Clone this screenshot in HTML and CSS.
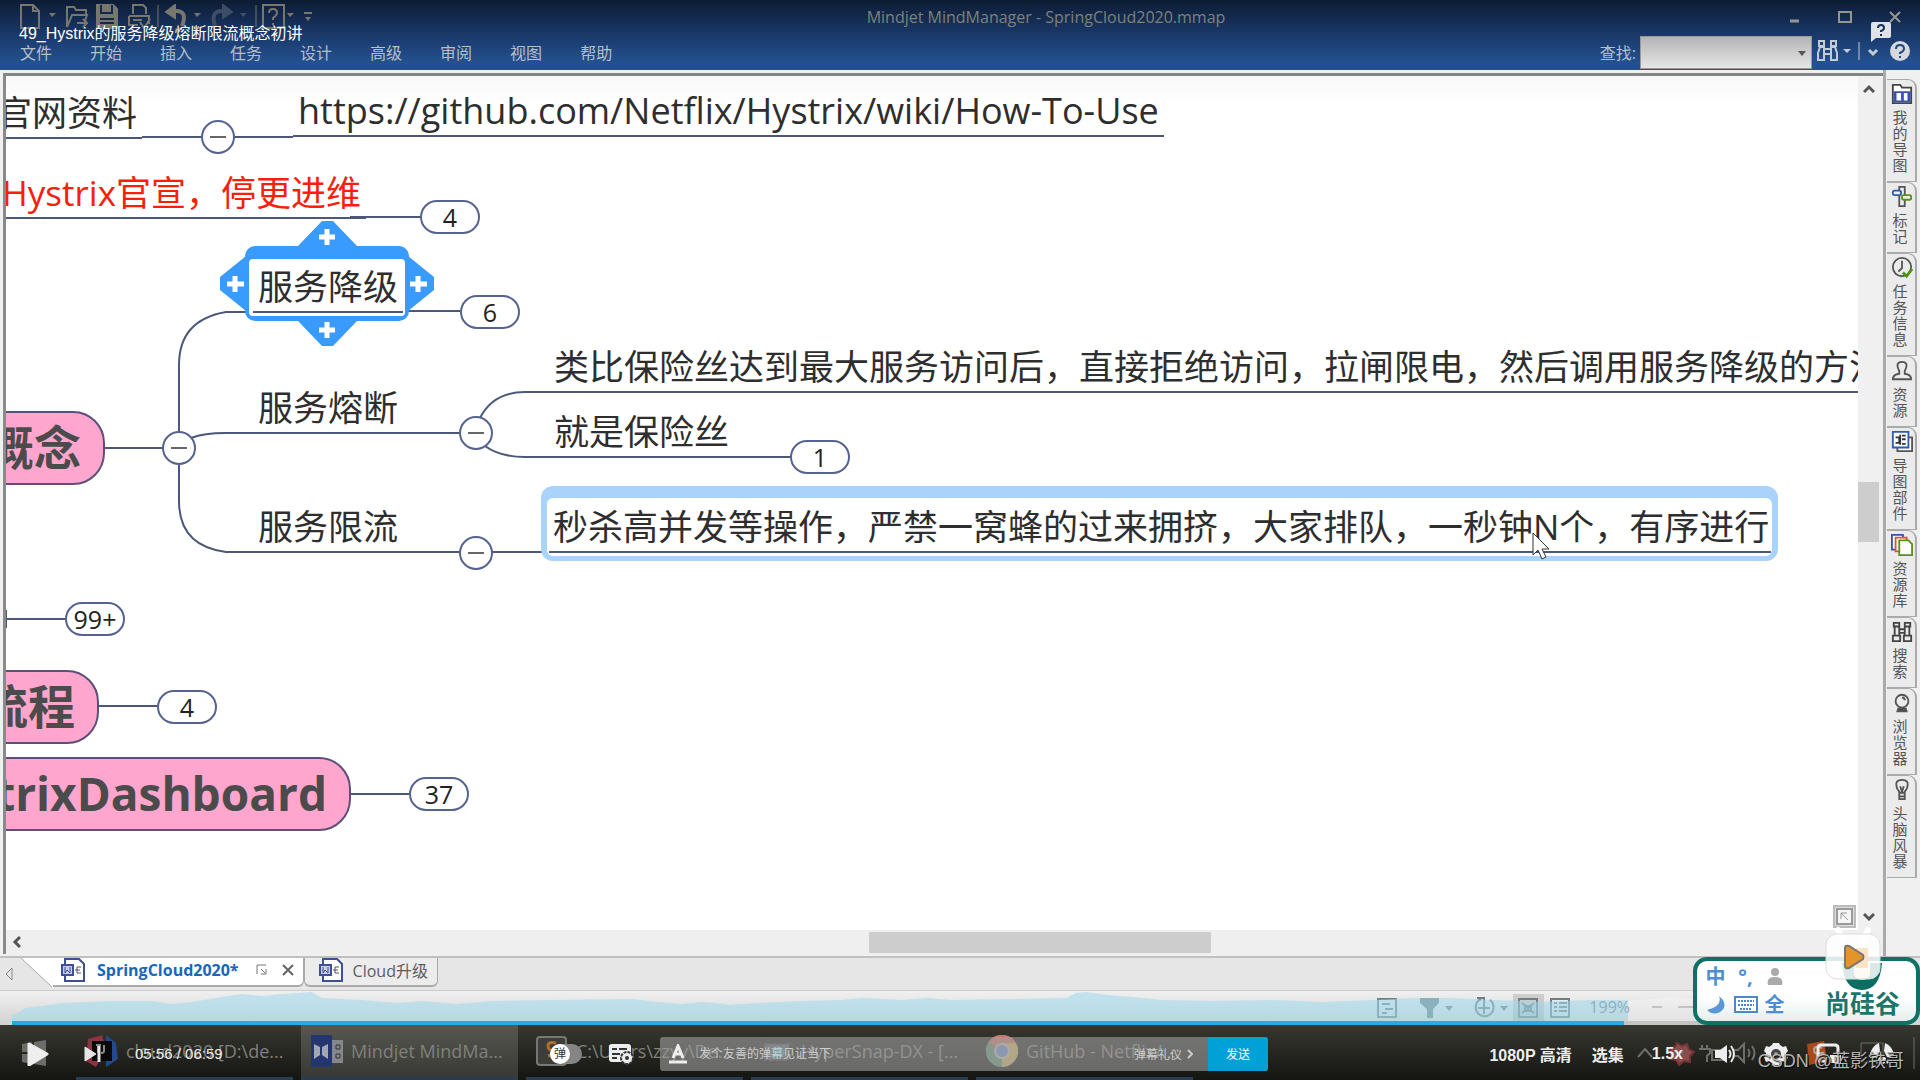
FILE: index.html
```html
<!DOCTYPE html>
<html lang="zh-CN">
<head>
    <meta charset="UTF-8">
    <meta name="viewport" content="width=device-width, initial-scale=1.0">
    <title>49_Hystrix的服务降级熔断限流概念初讲</title>
    <link rel="stylesheet" href="styles.css">
</head>
<body>
    <header class="app-header">
        <div class="title-row">
            <div class="quick-access">
                <svg width="298" height="26" viewBox="0 0 298 26" fill="none" stroke="#77776f" stroke-width="2">
                    <path d="M1 1h12l6 6v17H1zM13 1v6h6"/>
                    <path d="M47 23V3h7l2 3h10v5M47 23l5-12h15l-2 6M57 19h10M63 15l4 4-4 4"/>
                    <path d="M77 1h16l4 4v19H77z" fill="#77776f"/>
                    <path d="M81 1v8h11V1M80 15h14M80 19h14" stroke="#16294a"/>
                    <path d="M113 10V1h10l3 3v6M109 12h20v8M109 12v9h9M113 16h9M120 18l4 6 6-9"/>
                    <path d="M138 1v22M236 1v22" stroke-width="1"/>
                    <path d="M162 22q6-15-6-15h-5" stroke-width="4"/>
                    <path d="M146 8l9-7v13z" fill="#77776f"/>
                    <path d="M195 22q-5-15 7-15h5" stroke="#3d4d66" stroke-width="4"/>
                    <path d="M212 8l-9-7v13z" fill="#3d4d66" stroke="#3d4d66"/>
                    <path d="M243 1h21v23h-21z"/>
                    <path d="M249 9q0-4 4-4t4 4q0 2-4 5v2M253 19v2"/>
                    <path d="M29 9h7l-4 4zM174 9h7l-4 4zM267 9h7l-4 4zM285 13h6l-3 4z" fill="#77776f" stroke="none"/>
                    <path d="M220 9h7l-4 4z" fill="#3d4d66" stroke="none"/>
                    <path d="M284 9h8"/>
                </svg>
            </div>
            <h1 class="app-title">Mindjet MindManager - SpringCloud2020.mmap</h1>
            <div class="window-buttons">
                <button aria-label="最小化"><svg width="14" height="14"><path d="M2 11h9" stroke="#96968e" stroke-width="3"/></svg></button>
                <button aria-label="最大化"><svg width="14" height="14"><path d="M1 2h12v10H1z" fill="none" stroke="#96968e" stroke-width="2"/></svg></button>
                <button aria-label="关闭"><svg width="14" height="14"><path d="M2 2l10 10M12 2L2 12" stroke="#96968e" stroke-width="2"/></svg></button>
            </div>
        </div>
        <div class="menu-row">
            <nav class="menu">
                <a href="#">文件</a>
                <a href="#">开始</a>
                <a href="#">插入</a>
                <a href="#">任务</a>
                <a href="#">设计</a>
                <a href="#">高级</a>
                <a href="#">审阅</a>
                <a href="#">视图</a>
                <a href="#">帮助</a>
            </nav>
            <div class="search">
                <label for="find">查找:</label>
                <div class="search-box">
                    <select id="find"><option></option></select>
                    <svg width="8" height="5"><path d="M0 0h8L4 5z" fill="#555"/></svg>
                </div>
                <svg width="104" height="26" viewBox="0 0 104 26" fill="none" stroke="#c3cbd4" stroke-width="2">
                    <path d="M3 2h5v5H3zM15 2h5v5h-5zM2 21V14l2-6h4v13zM21 21v-7l-2-6h-4v13zM8 10h7M8 15h7"/>
                    <path d="M27 10h8l-4 4z" fill="#c3cbd4" stroke="none"/>
                    <path d="M43 3v18" stroke-width="1"/>
                    <path d="M53 11l4 4 4-4" stroke-width="3"/>
                    <circle cx="84" cy="12" r="10" fill="#d5d9de" stroke="none"/>
                    <path d="M80 10q0-4 4-4t4 4q0 2-4 4v1M84 17v2" stroke="#23477f"/>
                </svg>
            </div>
        </div>
        <span class="video-title">49_Hystrix的服务降级熔断限流概念初讲</span>
        <svg class="feedback" width="22" height="21" viewBox="0 0 22 21">
            <path d="M3 1h16q2 0 2 2v12q0 2-2 2H6l-5 4V3q0-2 2-2z" fill="#dfe3e8"/>
            <path d="M8 7q0-3 3-3t3 3q0 2-3 3v1M11 13v2" fill="none" stroke="#16305c" stroke-width="2"/>
        </svg>
    </header>

    <main class="workspace">
        <section class="document">
            <div class="map-row">
                <div class="map">
                    <svg class="links" width="1852" height="854">
                        <g transform="translate(-6 -76)" fill="none" stroke="#4b587a" stroke-width="2">
                            <path d="M142 137h60M234 137h59M350 217h71"/>
                            <path d="M104 448h59M179 432v-67q0-45 47-53h27M403 311h57"/>
                            <path d="M191 438q13-5 34-5h28M179 465v36q0 45 47 51h27"/>
                            <path d="M480 418q13-26 45-26h25M485 446q15 11 40 11h25M492 552h57"/>
                            <path d="M6 619h59M99 706h58M351 794h58M6 610v18"/>
                            <path d="M298 246l24-25h11l24 25zM298 321l24 25h11l24-25zM246 256l-26 21v13l26 21zM408 256l26 21v13l-26 21z" fill="#3a9bfe" stroke="none"/>
                            <rect x="245" y="246" width="164" height="75" rx="10" fill="#3a9bfe" stroke="none"/>
                            <rect x="249" y="259" width="156" height="57" rx="4" fill="#fff" stroke="none"/>
                            <path d="M319 237h16M327 229v16M319 330h16M327 322v16M227 284h17M235 276v16M410 284h17M418 276v16" stroke="#fff" stroke-width="5"/>
                            <rect x="541" y="486" width="1237" height="75" rx="12" fill="#aad3fb" stroke="none"/>
                            <rect x="547" y="498" width="1225" height="58" rx="6" fill="#fff" stroke="none"/>
                        </g>
                    </svg>
                    <div class="node site">官网资料</div>
                    <a class="node link" href="#">https://github.com/Netflix/Hystrix/wiki/How-To-Use</a>
                    <div class="node notice">Hystrix官宣，停更进维</div>
                    <div class="node fallback">服务降级</div>
                    <div class="node breaker">服务熔断</div>
                    <div class="node limit">服务限流</div>
                    <div class="node breaker-note">类比保险丝达到最大服务访问后，直接拒绝访问，拉闸限电，然后调用服务降级的方法</div>
                    <div class="node fuse">就是保险丝</div>
                    <div class="node limit-note">秒杀高并发等操作，严禁一窝蜂的过来拥挤，大家排队，一秒钟N个，有序进行</div>
                    <div class="topic concept">概念</div>
                    <div class="topic flow">流程</div>
                    <div class="topic dashboard">trixDashboard</div>
                    <button class="count notice-count">4</button>
                    <button class="count fallback-count">6</button>
                    <button class="count fuse-count">1</button>
                    <button class="count more-count">99+</button>
                    <button class="count flow-count">4</button>
                    <button class="count dashboard-count">37</button>
                    <button class="fold site-fold" aria-label="折叠"></button>
                    <button class="fold concept-fold" aria-label="折叠"></button>
                    <button class="fold breaker-fold" aria-label="折叠"></button>
                    <button class="fold limit-fold" aria-label="折叠"></button>
                    <svg class="cursor" width="18" height="28" viewBox="0 0 18 28"><path d="M1 1v22l5-5 4 9 4-2-4-8h7z" fill="#fff" stroke="#333" stroke-width="1"/></svg>
                    <svg class="fit" width="23" height="23" viewBox="0 0 23 23" fill="none" stroke="#999"><path d="M1 1h21v21H1z" fill="#ddd" stroke="#bbb" stroke-width="2"/><path d="M4 4h15v15H4z" fill="#f5f5f5" stroke-width="2"/><path d="M8 14V8h6M8 8l7 7"/></svg>
                </div>
                <div class="scroll-y">
                    <svg width="12" height="9"><path d="M1 8l5-5 5 5" fill="none" stroke="#555" stroke-width="3"/></svg>
                    <div class="thumb-y"></div>
                    <svg width="12" height="9"><path d="M1 1l5 5 5-5" fill="none" stroke="#555" stroke-width="3"/></svg>
                </div>
            </div>
            <div class="scroll-x">
                <svg width="9" height="12"><path d="M8 1L3 6l5 5" fill="none" stroke="#555" stroke-width="3"/></svg>
                <div class="thumb-x"></div>
            </div>
        </section>
        <aside class="dock">
            <button>
                <svg viewBox="0 0 24 24"><path d="M2 22V2h8l2 3h10v17z" fill="#fff" stroke="#444" stroke-width="2"/><path d="M3 9h18v12H3z" fill="#3652b5"/><path d="M6 11h5v8H6zM14 11h4v8h-4z" fill="#fff"/></svg>
                <span>我的导图</span>
            </button>
            <button>
                <svg viewBox="0 0 24 24" fill="#eee" stroke-width="2"><path d="M9 1h6v21H9z" stroke="#555"/><rect x="2" y="5" width="9" height="5" rx="2" stroke="#2d5bb0"/><rect x="12" y="10" width="10" height="5" rx="2" stroke="#5a8f1c"/></svg>
                <span>标记</span>
            </button>
            <button>
                <svg viewBox="0 0 24 24" fill="none" stroke="#555" stroke-width="2"><circle cx="12" cy="11" r="10"/><path d="M12 4v8l-4 4"/><path d="M13 17l4 4 6-8" stroke="#4f9313" stroke-width="3"/></svg>
                <span>任务信息</span>
            </button>
            <button>
                <svg viewBox="0 0 24 24" fill="none" stroke="#555" stroke-width="2"><path d="M2 21q0-5 7-6v-3Q4 2 12 2t3 10v3q7 1 7 6z"/></svg>
                <span>资源</span>
            </button>
            <button>
                <svg viewBox="0 0 24 24" fill="#fff" stroke-width="2"><path d="M7 7h16v15H7z" stroke="#555"/><path d="M2 1h17v17H2z" stroke="#2d5bb0"/><path d="M10 4v11M5 7h4v6H5M16 5h-4M16 9h-4M16 14h-4" stroke="#333"/></svg>
                <span>导图部件</span>
            </button>
            <button>
                <svg viewBox="0 0 24 24" fill="#fff" stroke-width="2"><path d="M1 1h12v16H1z" stroke="#3652a5"/><path d="M5 4h12v15H5z" stroke="#e0532c"/><path d="M9 7h10l4 4v12H9z" stroke="#5a8f1c"/></svg>
                <span>资源库</span>
            </button>
            <button>
                <svg viewBox="0 0 24 24" fill="none" stroke="#444" stroke-width="2"><path d="M3 2h6v4H3zM15 2h6v4h-6zM4 6h5v10H4zM15 6h5v10h-5zM2 16h8v6H2zM14 16h8v6h-8zM9 9h6M9 13h6"/></svg>
                <span>搜索</span>
            </button>
            <button>
                <svg viewBox="0 0 24 24" fill="none" stroke="#555" stroke-width="2"><circle cx="12" cy="10" r="7"/><path d="M12 6q3 0 3 3"/><path d="M8 18h8l1 3H7z" fill="#444"/></svg>
                <span>浏览器</span>
            </button>
            <button>
                <svg viewBox="0 0 24 24" fill="none" stroke="#555" stroke-width="2"><path d="M9 15q0-2-2-4Q3 1 12 1t5 10q-2 2-2 4zM9 15v7h6v-7M9 19h6M10 8l2 6 2-6"/></svg>
                <span>头脑风暴</span>
            </button>
        </aside>
    </main>

    <div class="file-tabs">
        <svg class="tab-prev" width="10" height="16"><path d="M8 2v12L2 8z" fill="none" stroke="#888"/></svg>
        <svg class="tab-slope" width="32" height="30"><path d="M0 0h32v30z" fill="#fff"/><path d="M0 0l31 29" stroke="#aaa"/></svg>
        <button class="tab active">
            <svg width="24" height="24" viewBox="0 0 24 24" fill="#fff" stroke="#3d4f96" stroke-width="2"><path d="M4 1h14l5 5v17H4z"/><path d="M1 7h11v10H1z" fill="#c8cde6"/><path d="M4 9v6l2-3 3 3V9" fill="none" stroke-width="1"/><path d="M20 9h-4v6h4M14 12h5" fill="none" stroke="#555" stroke-width="1"/></svg>
            SpringCloud2020*
            <svg class="tab-mark" width="11" height="11" fill="none" stroke="#777"><path d="M1 10V1h9M5 5l4 4M10 5v5H5"/></svg>
            <svg width="12" height="12"><path d="M1 1l10 10M11 1L1 11" stroke="#666" stroke-width="2"/></svg>
        </button>
        <button class="tab">
            <svg width="24" height="24" viewBox="0 0 24 24" fill="#fff" stroke="#3d4f96" stroke-width="2"><path d="M4 1h14l5 5v17H4z"/><path d="M1 7h11v10H1z" fill="#c8cde6"/><path d="M4 9v6l2-3 3 3V9" fill="none" stroke-width="1"/><path d="M20 9h-4v6h4M14 12h5" fill="none" stroke="#555" stroke-width="1"/></svg>
            Cloud升级
        </button>
    </div>

    <div class="status-bar">
        <div class="status-tools">
            <svg width="206" height="28" viewBox="0 0 206 28" fill="none" stroke="#737e83" stroke-width="2">
                <path d="M1 6h18v18H1zM5 11h8M8 16h8M5 20h5"/>
                <path d="M43 5h19v5l-6 6v9h-6v-9l-7-6z" fill="#737e83" stroke="none"/>
                <path d="M68 13h8l-4 5zM123 13h8l-4 5z" fill="#737e83" stroke="none"/>
                <path d="M113 7a9 9 0 1 1-9-1M107 9v12M101 15h12M100 5h7v6"/>
                <path d="M136 1h31v27h-31z" fill="#00000020" stroke="none"/>
                <path d="M142 6h18v18h-18zM145 10l12 10M157 10l-12 10M148 13h6v5h-6z"/>
                <path d="M174 6h18v18h-18zM177 10h3M182 10h8M177 14h3M182 14h8M177 18h3M182 18h8"/>
            </svg>
            <span>199%</span>
            <svg width="60" height="10"><path d="M0 5h10M26 5h34" stroke="#aaa" stroke-width="2"/></svg>
        </div>
        <svg class="heat" viewBox="0 0 1896 30" preserveAspectRatio="none">
            <path d="M0 30V24L6 22L14 17L30 15L50 12L100 10L140 10L160 13L180 11L210 6L230 3L250 5L270 3L300 1L310 7L350 9L385 12L410 10L445 13L480 10L540 9L620 8L645 11L670 13L690 11L705 12L716 14L745 12L790 10L830 9L850 7L890 9L915 7L940 9L1000 8L1054 7L1064 2L1074 1L1096 4L1120 6L1150 9L1200 10L1260 9L1310 11L1360 9L1400 7L1440 7L1480 9L1530 11L1580 9L1616 9V30z" fill="#9fd9ee" opacity="0.55"/>
            <path d="M1616 30V10L1660 6L1690 9L1740 9L1800 11L1896 14V30z" fill="#fff" opacity="0.3"/>
        </svg>
        <div class="progress"><div class="played"></div></div>
    </div>

    <footer class="taskbar">
        <div class="apps">
            <svg class="start" width="24" height="26"><path d="M0 4l10-2v10H0zM12 2l12-2v12H12zM0 14h10v10L0 22zM12 14h12v12l-12-2z" fill="#6c6c68"/></svg>
            <button class="app">
                <svg width="32" height="32" viewBox="0 0 32 32"><path d="M2 4l14-4 4 14L10 32 0 26z" fill="#8c3344"/><path d="M20 0l10 8 2 16-12 8z" fill="#234a8c"/><path d="M6 6h20v20H6z" fill="#0a0a0a"/><path d="M10 10h5M12 10v8M18 10v6q0 2-3 2" stroke="#888" stroke-width="2" fill="none"/></svg>
                <span>cloud2020 [D:\de...</span>
            </button>
            <button class="app current">
                <svg width="32" height="32" viewBox="0 0 32 32"><path d="M0 0h21v32H0z" fill="#24366f"/><path d="M21 5h11v23H21z" fill="#85878b"/><path d="M3 9l6 3V20l-6 4zM17 9l-6 3v8l6 4z" fill="#a4a8b0"/><path d="M25 10h4v4h-4zM25 19h4v4h-4z" fill="none" stroke="#333"/></svg>
                <span>Mindjet MindMa...</span>
            </button>
            <button class="app">
                <svg width="32" height="32" viewBox="0 0 32 32"><rect x="1" y="2" width="29" height="28" rx="3" fill="#3d3d3b" stroke="#777" stroke-width="2"/><path d="M20 8q-8-2-8 3t8 5-8 5" fill="none" stroke="#a8702a" stroke-width="3"/></svg>
                <span>C:\Users\zzyy\De...</span>
            </button>
            <button class="app">
                <svg width="32" height="32" viewBox="0 0 32 32"><path d="M4 9h24v16H4z" fill="#5c6464" stroke="#494949" stroke-width="2" stroke-dasharray="4 3"/><circle cx="17" cy="17" r="6" fill="#36a3ad"/></svg>
                <span>HyperSnap-DX - [...</span>
            </button>
            <button class="app">
                <svg width="32" height="32" viewBox="0 0 32 32"><path d="M16 16L2 8a16 16 0 0 1 28 0z" fill="#c77568"/><path d="M16 16L2 8a16 16 0 0 0 14 24z" fill="#5c9172"/><path d="M16 16h15A16 16 0 0 0 30 8M16 32a16 16 0 0 0 14-24H16z" fill="#cfae60"/><circle cx="16" cy="16" r="7" fill="#6f8cc8" stroke="#bbb" stroke-width="2"/></svg>
                <span>GitHub - Netflix/...</span>
            </button>
        </div>

        <svg class="tray" width="280" height="32" viewBox="0 0 280 32" fill="none" stroke="#6e6e6a" stroke-width="2">
            <path d="M2 20l7-8 7 8"/>
            <path d="M41 6l5 3 5-2 2 5 5 3-4 4v6l-6-1-5 4-3-5-6-1 2-6-3-5 6-1z" fill="#8a4c4c" stroke="#713333"/>
            <path d="M36 17l4-3 4 3 4-3" stroke="#5c6c8c"/>
            <path d="M66 8v4h5V8M63 12h11v4l-3 3v6M76 13h12v10H76z"/>
            <path d="M97 13h5l6-6v18l-6-6h-5M112 12q3 4 0 8M116 9q5 7 0 14"/>
            <path d="M134 11h14v9h-14zM141 7v19"/>
            <path d="M171 7l17-3 3 20-18 4z" fill="#a8491c" stroke="none"/><path d="M186 11q-8-3-8 2t7 3-5 7" stroke="#b7a498"/>
            <path d="M225 6h22v19h-22zM278 0v32" stroke-width="1"/>
        </svg>

        <div class="player">
            <div class="player-left">
                <button aria-label="播放"><svg width="22" height="24"><path d="M2 2l18 10L2 23z" fill="#eee" stroke="#eee" stroke-width="3" stroke-linejoin="round"/></svg></button>
                <button class="next" aria-label="下一集"><svg width="17" height="16"><path d="M1 1l11 7-11 7z" fill="#e5e5e5" stroke="#e5e5e5"/><path d="M15 0v16" stroke="#e5e5e5" stroke-width="3"/></svg></button>
                <span class="time">05:56 / 06:59</span>
            </div>
            <div class="player-send">
                <button class="danmu" aria-label="弹幕开关"><span>弹</span></button>
                <button aria-label="弹幕设置"><svg width="26" height="22" viewBox="0 0 26 22"><rect x="1" y="1" width="22" height="18" rx="3" fill="#eee"/><path d="M4 6h5M11 6h8M4 11h8M4 15h5" stroke="#333" stroke-width="2"/><circle cx="19" cy="15" r="6" fill="#eee" stroke="#333" stroke-width="2" stroke-dasharray="3 1"/><circle cx="19" cy="15" r="2" fill="#333"/></svg></button>
                <div class="danmu-bar">
                    <svg width="18" height="20" viewBox="0 0 18 20" fill="none" stroke="#eee"><path d="M4 14L9 2l5 12M6 10h6" stroke-width="3"/><path d="M0 18h18" stroke-width="3"/></svg>
                    <input type="text" aria-label="弹幕" placeholder="发个友善的弹幕见证当下">
                    <a href="#">弹幕礼仪<svg width="6" height="10"><path d="M1 1l4 4-4 4" fill="none" stroke="#ccc" stroke-width="2"/></svg></a>
                    <button class="send">发送</button>
                </div>
            </div>
            <div class="player-right">
                <button>1080P 高清</button>
                <button>选集</button>
                <button class="speed">1.5x</button>
                <button aria-label="音量"><svg width="22" height="20" viewBox="0 0 22 20"><path d="M1 6h5l7-5v18l-7-5H1z" fill="#eee"/><path d="M15 6q3 4 0 8M17 2q6 8 0 16" fill="none" stroke="#eee" stroke-width="2"/></svg></button>
                <button aria-label="设置"><svg width="26" height="24" viewBox="0 0 26 24"><path d="M9 3l1-2h6l1 2 3 2 3-1 2 5-2 2v2l2 2-2 5-3-1-3 2-1 2h-6l-1-2-3-2-3 1-2-5 2-2v-2L1 9l2-5 3 1z" fill="#eee"/><circle cx="13" cy="12" r="5" fill="#444"/><circle cx="13" cy="12" r="2" fill="#999"/></svg></button>
                <button aria-label="画中画"><svg width="26" height="22" viewBox="0 0 26 22"><path d="M10 18H5q-3 0-3-3V5q0-3 3-3h14q3 0 3 3v5" fill="none" stroke="#eee" stroke-width="3"/><rect x="14" y="12" width="11" height="8" fill="#eee"/></svg></button>
                <button aria-label="全屏"><svg width="26" height="24" viewBox="0 0 26 24" fill="#eee"><path d="M10 1Q3 4 1 12l2 4 5-1 3-6zM16 1q7 3 9 11l-2 4-5-1-3-6zM13 13l4 3-1 5-3 2-3-2-1-5zM4 18l4 4 1-3zM22 18l-4 4-1-3z"/></svg></button>
            </div>
        </div>
        <span class="watermark">CSDN @蓝影铁哥</span>
    </footer>

    <div class="ime">
        <div class="ime-keys">
            <span>中</span><span>°,</span>
            <svg width="16" height="20"><circle cx="8" cy="5" r="4" fill="#aaa"/><path d="M1 18q-2-8 7-8t7 8z" fill="#aaa"/></svg>
            <svg width="20" height="20"><path d="M13 1q4 10-12 14 6 6 13 2t3-12z" fill="#5b97d6"/></svg>
            <svg width="24" height="18"><rect x="1" y="1" width="22" height="15" fill="#fff" stroke="#4d87c8" stroke-width="2"/><path d="M4 5h16M4 9h16M6 13h12" stroke="#4d87c8" stroke-width="2" stroke-dasharray="2 1"/></svg>
            <span>全</span>
        </div>
        <div class="brand">
            <svg width="44" height="28" viewBox="0 0 44 28"><path d="M2 0q2 27 20 27T42 0" fill="#0c6e62"/><path d="M14 0v9q0 8 8 8t8-8V0" fill="#f7dcbc"/></svg>
            <span>尚硅谷</span>
        </div>
        <svg class="marker" width="66" height="66" viewBox="0 0 66 66">
            <path d="M18 12l5 9M48 12l-5 9" stroke="#fff" stroke-width="6" stroke-linecap="round"/>
            <rect x="6" y="16" width="54" height="45" rx="11" fill="#fff" fill-opacity="0.85" stroke="#ddd"/>
            <path d="M36 30h12v20H36z" fill="#fce3c7"/>
            <path d="M25 30q0-3 4-2l14 9q1 2 0 4l-14 9q-4 1-4-2z" fill="#e4942b" stroke="#777" stroke-width="2"/>
        </svg>
    </div>
</body>
</html>
```
FILE: styles.css
```css
* {
    box-sizing: border-box;
}

body {
    margin: 0;
    height: 100vh;
    display: flex;
    flex-direction: column;
    overflow: hidden;
    position: relative;
    font-family: "Open Sans", "Noto Sans CJK SC", sans-serif;
    font-size: 16px;
    background-color: #e6e6e6;
}

button {
    border: none;
    background: none;
    padding: 0;
    font-family: inherit;
    font-size: inherit;
    font-weight: inherit;
    color: inherit;
    cursor: pointer;
}

a {
    color: inherit;
    text-decoration: none;
}

svg {
    display: block;
    flex-shrink: 0;
}

/* header */
.app-header {
    position: relative;
    background: linear-gradient(#0d1c34, #173360 40%, #23508f 88%);
}

.title-row {
    display: flex;
    align-items: center;
    height: 34px;
    padding: 0 18px 0 20px;
}

.app-title {
    flex: 1;
    margin: 0 14px 0 0;
    text-align: center;
    font-size: 16px;
    font-weight: normal;
    color: #7f8079;
}

.window-buttons {
    display: flex;
    gap: 36px;
}

.menu-row {
    display: flex;
    justify-content: space-between;
    align-items: center;
    height: 36px;
    padding: 0 0 0 20px;
    color: #b6bfc8;
}

.menu {
    display: flex;
    gap: 38px;
}

.search {
    display: flex;
    align-items: center;
    gap: 4px;
}

.search-box {
    position: relative;
}

.search-box svg {
    position: absolute;
    right: 6px;
    top: 15px;
    pointer-events: none;
}

.search select {
    display: block;
    appearance: none;
    width: 172px;
    height: 33px;
    border: 1px solid #999;
    border-radius: 0;
    background: linear-gradient(#b4b4b4, #e6e6e6);
}

.video-title {
    position: absolute;
    left: 19px;
    top: 22px;
    line-height: 24px;
    font-family: "Liberation Sans", "Noto Sans CJK SC", sans-serif;
    color: #fff;
}

.feedback {
    position: absolute;
    right: 28px;
    top: 21px;
}

/* workspace */
.workspace {
    flex: 1;
    display: flex;
    min-height: 0;
    border-bottom: 2px solid #c0c0c0;
    background-color: #f0f0f0;
}

.document {
    flex: 1;
    min-width: 0;
    display: flex;
    flex-direction: column;
    margin: 3px 0 2px 3px;
    border-top: 3px solid #858585;
    border-left: 3px solid #8a8a8a;
}

.map-row {
    flex: 1;
    display: flex;
    min-height: 0;
}

.map {
    flex: 1;
    position: relative;
    overflow: hidden;
    background: linear-gradient(#f8f8f8, #fff 30px);
}

.links {
    position: absolute;
    left: 0;
    top: 0;
}

.node {
    position: absolute;
    padding: 0 5px 4px;
    border-bottom: 2px solid #4b587a;
    font-size: 35px;
    line-height: 40px;
    white-space: nowrap;
    color: #2e2e2e;
}

.site {
    left: -14px;
    top: 17px;
}

.link {
    left: 287px;
    top: 15px;
    font-size: 36px;
}

.notice {
    left: -9px;
    top: 97px;
    color: #f8200a;
}

.fallback {
    left: 247px;
    top: 191px;
}

.breaker,
.limit {
    left: 247px;
    width: 208px;
}

.breaker {
    top: 312px;
}

.limit {
    top: 431px;
}

.breaker-note,
.fuse,
.limit-note {
    left: 543px;
}

.breaker-note {
    top: 271px;
}

.fuse {
    top: 336px;
    width: 242px;
}

.limit-note {
    top: 431px;
    width: 1222px;
    padding-left: 4px;
}

.topic {
    position: absolute;
    height: 74px;
    padding: 0 22px;
    border: 2px solid #5c4f7c;
    border-radius: 32px;
    background-color: #ffa6ce;
    font-size: 47px;
    font-weight: bold;
    line-height: 68px;
    white-space: nowrap;
    color: #4b4b4b;
}

.concept {
    top: 335px;
    right: calc(100% - 99px);
}

.flow {
    top: 594px;
    right: calc(100% - 93px);
}

.dashboard {
    top: 681px;
    right: calc(100% - 345px);
    font-size: 46px;
}

.count {
    position: absolute;
    width: 60px;
    height: 34px;
    border: 2px solid #566390;
    border-radius: 17px;
    background-color: #fff;
    font-size: 25px;
    line-height: 28px;
    color: #222;
}

.notice-count {
    left: 414px;
    top: 124px;
}

.fallback-count {
    left: 454px;
    top: 219px;
}

.fuse-count {
    left: 784px;
    top: 364px;
}

.more-count {
    left: 59px;
    top: 526px;
}

.flow-count {
    left: 151px;
    top: 614px;
}

.dashboard-count {
    left: 403px;
    top: 701px;
}

.fold {
    position: absolute;
    display: flex;
    align-items: center;
    justify-content: center;
    width: 34px;
    height: 34px;
    border: 2px solid #566390;
    border-radius: 50%;
    background-color: #fff;
}

.fold::before {
    content: "";
    width: 16px;
    height: 2px;
    background-color: #666;
}

.site-fold {
    left: 195px;
    top: 44px;
}

.concept-fold {
    left: 156px;
    top: 355px;
}

.breaker-fold {
    left: 453px;
    top: 340px;
}

.limit-fold {
    left: 453px;
    top: 460px;
}

.cursor {
    position: absolute;
    left: 1526px;
    top: 456px;
}

.fit {
    position: absolute;
    right: 2px;
    bottom: 2px;
}

.scroll-y {
    display: flex;
    flex-direction: column;
    align-items: center;
    width: 25px;
    padding: 8px 4px 8px 0;
    background-color: #f0f0f0;
}

.thumb-y {
    width: 21px;
    height: 60px;
    margin: 389px 0 auto;
    background-color: #cdcdcd;
}

.scroll-x {
    display: flex;
    align-items: center;
    height: 24px;
    padding-left: 6px;
    background-color: #efefef;
}

.thumb-x {
    width: 342px;
    height: 21px;
    margin-left: 848px;
    background-color: #cdcdcd;
}

/* right dock */
.dock {
    width: 37px;
    padding: 9px 3px 0 1px;
    border-left: 3px solid #aaa;
}

.dock button {
    display: block;
    width: 30px;
    padding: 3px 0 8px;
    border: solid #aaa;
    border-width: 1px 2px 1px 0;
    border-radius: 0 9px 0 0;
    background-color: #ebebeb;
}

.dock svg {
    width: 24px;
    height: 22px;
    margin: 0 0 4px 3px;
}

.dock span {
    display: block;
    width: 16px;
    margin-left: 5px;
    font-size: 15px;
    line-height: 16px;
    word-break: break-all;
    color: #555;
}

/* document tabs */
.file-tabs {
    display: flex;
    align-items: flex-start;
    height: 33px;
    padding-left: 4px;
    border-bottom: 1px solid #ccc;
}

.tab-prev {
    margin: 8px 7px 0 0;
}

.tab {
    display: flex;
    align-items: center;
    gap: 10px;
    height: 29px;
    padding: 0 9px 4px 14px;
    border: solid #aaa;
    border-width: 0 1px 2px;
    border-radius: 0 0 6px 6px;
    background-color: #ececec;
    color: #5c5c5c;
}

.tab.active {
    gap: 12px;
    padding-left: 8px;
    border-left: none;
    border-radius: 0 0 6px 0;
    background-color: #fff;
    font-weight: bold;
    color: #1766be;
}

.tab-mark {
    margin: 0 3px 0 5px;
}

/* status bar with the player timeline over it */
.status-bar {
    position: relative;
    height: 34px;
    background: linear-gradient(#f0f0f0, #d2d2d2);
}

.status-tools {
    display: flex;
    align-items: center;
    justify-content: flex-end;
    height: 32px;
    padding-right: 208px;
    color: #737e83;
}

.status-tools span {
    margin: 0 22px 0 6px;
}

.heat {
    position: absolute;
    left: 12px;
    bottom: 4px;
    width: calc(100% - 24px);
    height: 30px;
}

.progress {
    position: absolute;
    left: 12px;
    right: 12px;
    bottom: 0;
    height: 4px;
    background-color: #c4c4c4;
}

.played {
    width: 85%;
    height: 4px;
    background-color: #23ade5;
}

/* taskbar */
.taskbar {
    position: relative;
    height: 55px;
    background: linear-gradient(#383832, #141411);
}

.apps {
    display: flex;
    align-items: center;
    gap: 8px;
    height: 55px;
    padding-left: 22px;
}

.start {
    margin-right: 22px;
}

.app {
    display: flex;
    align-items: center;
    gap: 8px;
    width: 217px;
    height: 55px;
    padding-left: 10px;
    border-bottom: 3px solid #2a3c50;
    font-size: 18px;
    white-space: nowrap;
    color: #80807c;
}

.app.current {
    background: linear-gradient(#585852, #383834);
}

.tray {
    position: absolute;
    right: 4px;
    top: 12px;
}

.player {
    position: absolute;
    top: 0;
    left: 0;
    right: 0;
    height: 55px;
    display: flex;
    align-items: center;
    padding: 2px 25px 0 27px;
    font-family: "Liberation Sans", "Noto Sans CJK SC", sans-serif;
    color: #eee;
}

.player-left {
    display: flex;
    align-items: center;
    width: 28%;
}

.next {
    margin: 0 34px 0 35px;
}

.time {
    font-size: 15px;
}

.player-send {
    display: flex;
    align-items: center;
    gap: 26px;
}

.danmu {
    width: 32px;
    height: 20px;
    border-radius: 10px;
    background-color: #858585;
}

.danmu span {
    display: block;
    width: 20px;
    height: 20px;
    border-radius: 50%;
    background-color: #fff;
    font-size: 12px;
    line-height: 20px;
    color: #333;
}

.danmu-bar {
    display: flex;
    align-items: center;
    gap: 12px;
    width: 608px;
    height: 34px;
    padding-left: 9px;
    border-radius: 3px;
    background-color: rgba(160, 160, 160, 0.6);
    font-size: 12px;
    color: #ccc;
}

.danmu-bar a {
    display: flex;
    align-items: center;
    gap: 5px;
    margin-right: 3px;
}

.danmu-bar input {
    flex: 1;
    min-width: 0;
    padding: 0;
    border: none;
    background: none;
    font-family: inherit;
    font-size: 12px;
    color: #eee;
}

.danmu-bar input::placeholder {
    color: #ccc;
}

.send {
    width: 60px;
    height: 34px;
    border-radius: 0 3px 3px 0;
    background-color: #00a1d6;
    color: #fff;
}

.player-right {
    display: flex;
    align-items: center;
    gap: 20px;
    margin-left: auto;
    font-size: 16px;
    font-weight: bold;
}

.player-right svg {
    margin-left: 7px;
}

.player-right .speed {
    margin: 0 4px 0 8px;
}

.watermark {
    position: absolute;
    right: 16px;
    bottom: 6px;
    font-family: "Liberation Sans", "Noto Sans CJK SC", sans-serif;
    font-size: 18px;
    line-height: 26px;
    color: #b4b4b4;
    text-shadow: 1px 1px 1px #000;
}

/* input method panel */
.ime {
    position: absolute;
    right: 0;
    bottom: 55px;
    display: flex;
    justify-content: space-between;
    width: 227px;
    height: 68px;
    padding: 2px 16px 2px 4px;
    border: 4px solid #126f64;
    border-radius: 14px;
    background: linear-gradient(#fff 60%, #e3efec);
}

.ime-keys {
    display: grid;
    grid-template-columns: 29px 31px 27px;
    align-items: center;
    justify-items: center;
    font-size: 20px;
    font-weight: bold;
    line-height: 26px;
    color: #4c8ed4;
}

.brand {
    display: flex;
    flex-direction: column;
    align-items: center;
    font-size: 25px;
    font-weight: bold;
    line-height: 24px;
    color: #1d7468;
}

.marker {
    position: absolute;
    right: 30px;
    bottom: 37px;
}
```
